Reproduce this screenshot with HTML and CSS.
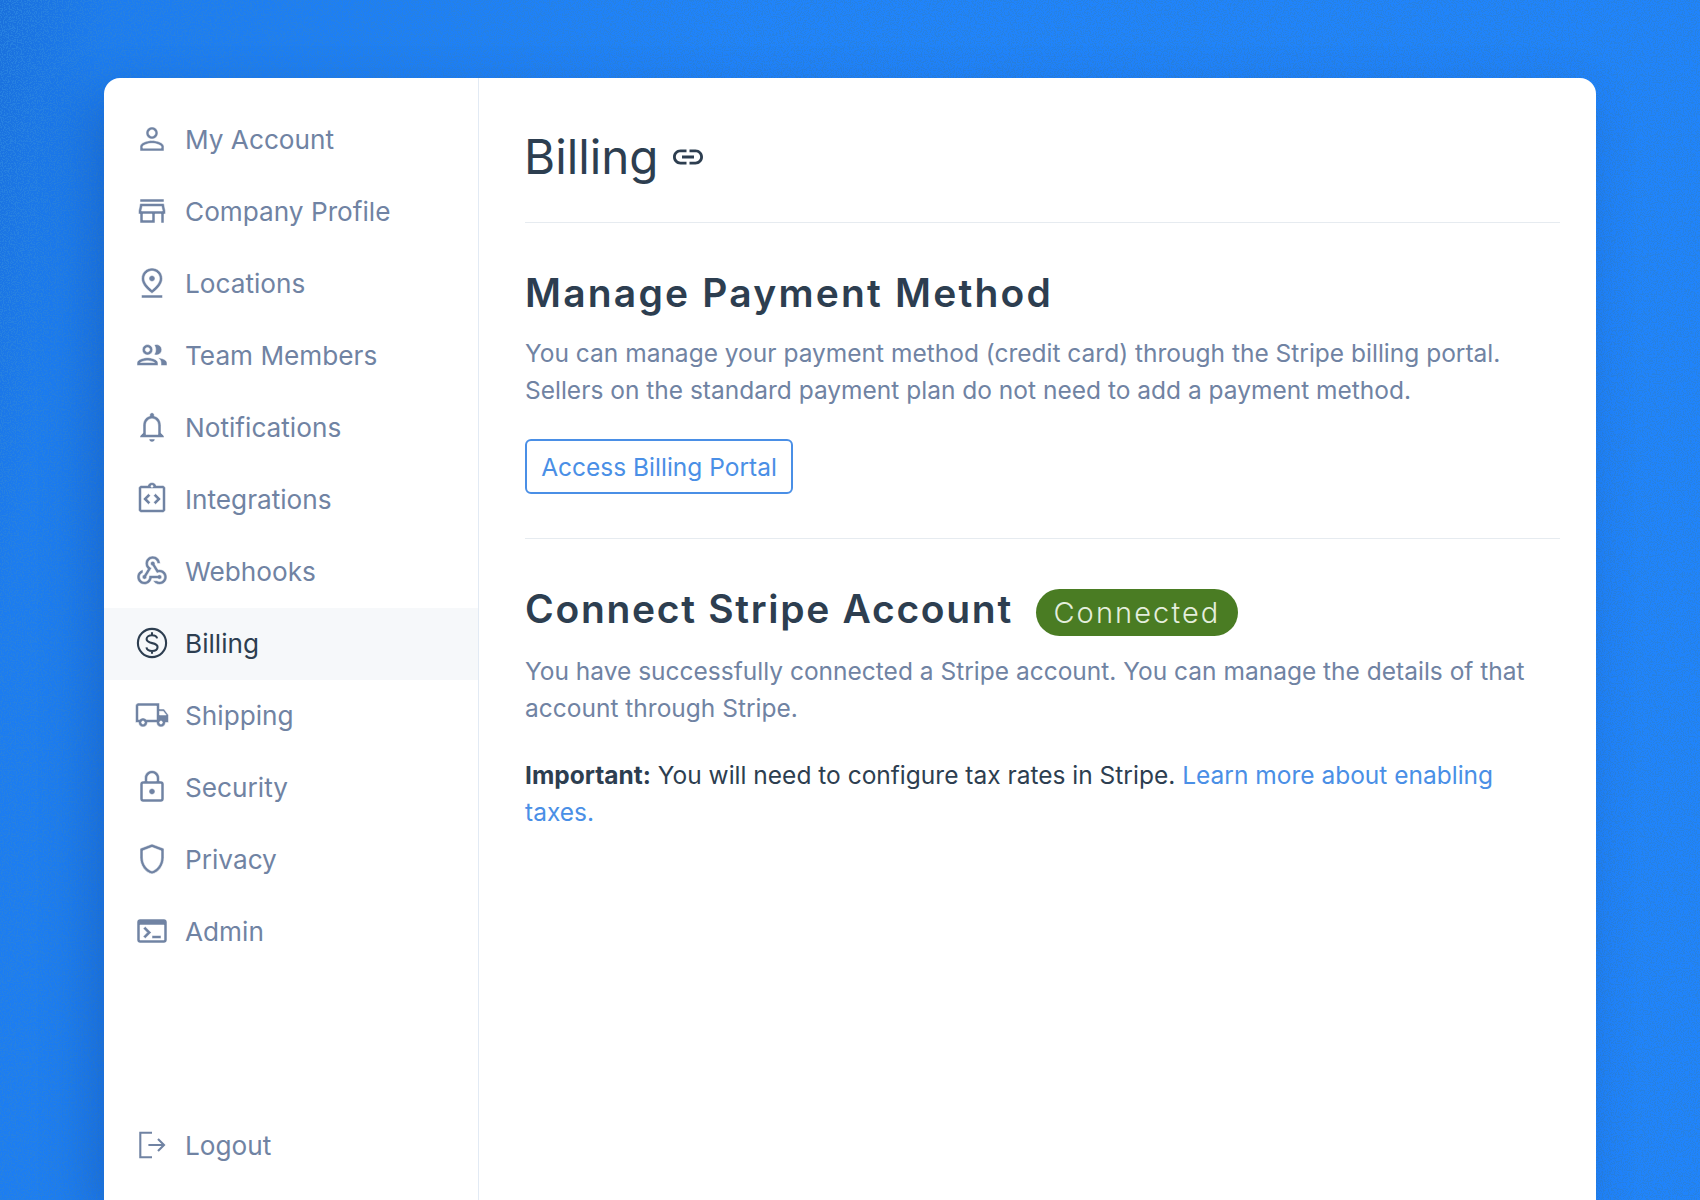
FILE: index.html
```html
<!DOCTYPE html>
<html lang="en">
<head>
    <meta charset="UTF-8">
    <title>Billing</title>
    <link rel="stylesheet" href="styles.css">
</head>
<body>
    <svg class="noise" aria-hidden="true">
        <filter id="grain" x="0" y="0" width="100%" height="100%">
            <feTurbulence type="fractalNoise" baseFrequency="0.85" numOctaves="2" seed="4"/>
            <feColorMatrix values="0 0 0 0 0.02  0 0 0 0 0.22  0 0 0 0 0.75  9 0 0 0 -4.4"/>
        </filter>
        <rect width="100%" height="100%" filter="url(#grain)"/>
    </svg>

    <div class="card">
        <nav class="sidebar">
            <a class="nav-item">
                <svg class="nav-icon" viewBox="0 0 24 24"><path d="M12 5.9c1.16 0 2.1.94 2.1 2.1s-.94 2.1-2.1 2.1S9.9 9.16 9.9 8s.94-2.1 2.1-2.1m0 9c2.97 0 6.1 1.46 6.1 2.1v1.1H5.9V17c0-.64 3.13-2.1 6.1-2.1M12 4C9.79 4 8 5.79 8 8s1.79 4 4 4 4-1.79 4-4-1.79-4-4-4zm0 9c-2.67 0-8 1.34-8 4v3h16v-3c0-2.66-5.33-4-8-4z"/></svg>
                My Account
            </a>
            <a class="nav-item">
                <svg class="nav-icon" viewBox="0 0 24 24"><path d="M18.36 9l.6 3H5.04l.6-3h12.72M20 4H4v2h16V4zm0 3H4l-1 5v2h1v6h10v-6h4v6h2v-6h1v-2l-1-5zM6 18v-4h6v4H6z"/></svg>
                Company Profile
            </a>
            <a class="nav-item">
                <svg class="nav-icon" viewBox="0 0 24 24"><path d="M12 4c1.93 0 5 1.4 5 5.15 0 2.16-1.72 4.67-5 7.32-3.28-2.65-5-5.17-5-7.32C7 5.4 10.07 4 12 4m0-2C8.73 2 5 4.46 5 9.15c0 3.12 2.33 6.41 7 9.85 4.67-3.44 7-6.73 7-9.85C19 4.46 15.27 2 12 2z"/><path d="M12 7c-1.1 0-2 .9-2 2s.9 2 2 2c1.11 0 2-.9 2-2s-.89-2-2-2zM5 20h14v2H5v-2z"/></svg>
                Locations
            </a>
            <a class="nav-item">
                <svg class="nav-icon" viewBox="0 0 24 24"><path d="M9 13.75c-2.34 0-7 1.17-7 3.5V19h14v-1.75c0-2.33-4.66-3.5-7-3.5zM4.34 17c.84-.58 2.87-1.25 4.66-1.25s3.82.67 4.66 1.25H4.34zM9 12c1.93 0 3.5-1.57 3.5-3.5S10.93 5 9 5 5.5 6.57 5.5 8.5 7.07 12 9 12zm0-5c.83 0 1.5.67 1.5 1.5S9.83 10 9 10s-1.5-.67-1.5-1.5S8.17 7 9 7zm7.04 6.81c1.16.84 1.96 1.96 1.96 3.44V19h4v-1.75c0-2.02-3.5-3.17-5.96-3.44zM15 12c1.93 0 3.5-1.57 3.5-3.5S16.93 5 15 5c-.54 0-1.04.13-1.5.35.63.89 1 1.98 1 3.15s-.37 2.26-1 3.15c.46.22.96.35 1.5.35z"/></svg>
                Team Members
            </a>
            <a class="nav-item">
                <svg class="nav-icon" viewBox="0 0 24 24"><path d="M12 22c1.1 0 2-.9 2-2h-4c0 1.1.9 2 2 2zm6-6v-5c0-3.07-1.63-5.64-4.5-6.32V4c0-.83-.67-1.5-1.5-1.5s-1.5.67-1.5 1.5v.68C7.64 5.36 6 7.92 6 11v5l-2 2v1h16v-1l-2-2zm-2 1H8v-6c0-2.48 1.51-4.5 4-4.5s4 2.02 4 4.5v6z"/></svg>
                Notifications
            </a>
            <a class="nav-item">
                <svg class="nav-icon" viewBox="0 0 24 24"><path d="M11 14.17L8.83 12 11 9.83 9.59 8.41 6 12l3.59 3.59zM14.41 15.59L18 12l-3.59-3.59L13 9.83 15.17 12 13 14.17z"/><path d="M19 3h-4.18C14.4 1.84 13.3 1 12 1s-2.4.84-2.82 2H5c-1.1 0-2 .9-2 2v14c0 1.1.9 2 2 2h14c1.1 0 2-.9 2-2V5c0-1.1-.9-2-2-2zm-7-.25c.41 0 .75.34.75.75s-.34.75-.75.75-.75-.34-.75-.75.34-.75.75-.75zM19 19H5V5h14v14z"/></svg>
                Integrations
            </a>
            <a class="nav-item">
                <svg class="nav-icon" viewBox="0 0 24 24"><path d="M10 15h5.88c.27-.31.67-.5 1.12-.5.83 0 1.5.67 1.5 1.5s-.67 1.5-1.5 1.5c-.44 0-.84-.19-1.12-.5H11.9c-.46 2.28-2.48 4-4.9 4-2.76 0-5-2.24-5-5 0-2.42 1.72-4.44 4-4.9v2.07c-1.16.41-2 1.53-2 2.83 0 1.65 1.35 3 3 3s3-1.35 3-3v-2zm2.5-11c1.65 0 3 1.35 3 3h2c0-2.76-2.24-5-5-5s-5 2.24-5 5c0 1.43.6 2.71 1.55 3.62l-2.35 3.9C6.02 14.66 5.5 15.27 5.5 16c0 .83.67 1.5 1.5 1.5s1.5-.67 1.5-1.5c0-.16-.02-.31-.07-.45l3.38-5.63C10.49 9.61 9.5 8.42 9.5 7c0-1.65 1.35-3 3-3zm4.5 9c-.64 0-1.23.2-1.72.54l-3.05-5.07C11.53 8.35 11 7.74 11 7c0-.83.67-1.5 1.5-1.5S14 6.17 14 7c0 .15-.02.29-.06.43l2.19 3.65c.28-.05.57-.08.87-.08 2.76 0 5 2.24 5 5s-2.24 5-5 5c-1.85 0-3.47-1.01-4.33-2.5h2.67c.48.32 1.05.5 1.66.5 1.65 0 3-1.35 3-3s-1.35-3-3-3z"/></svg>
                Webhooks
            </a>
            <a class="nav-item active">
                <svg class="nav-icon" viewBox="0 0 24 24"><circle class="line" cx="12" cy="12" r="9.4"/><path class="line" d="M15.4 8.9c-.3-1.4-1.6-2.1-3.4-2.1-2 0-3.6 1-3.6 2.6 0 3.6 7.3 1.8 7.3 5.3 0 1.7-1.7 2.6-3.7 2.6-1.9 0-3.4-.8-3.7-2.4M12 4.8v2M12 17.2v2"/></svg>
                Billing
            </a>
            <a class="nav-item">
                <svg class="nav-icon" viewBox="0 0 24 24"><path d="M20 8h-3V4H3c-1.1 0-2 .9-2 2v11h2c0 1.66 1.34 3 3 3s3-1.34 3-3h6c0 1.66 1.34 3 3 3s3-1.34 3-3h2v-5l-3-4zm-.5 1.5l1.96 2.5H17V9.5h2.5zM6 18c-.55 0-1-.45-1-1s.45-1 1-1 1 .45 1 1-.45 1-1 1zm2.22-3c-.55-.61-1.33-1-2.22-1s-1.67.39-2.22 1H3V6h12v9H8.22zM18 18c-.55 0-1-.45-1-1s.45-1 1-1 1 .45 1 1-.45 1-1 1z"/></svg>
                Shipping
            </a>
            <a class="nav-item">
                <svg class="nav-icon" viewBox="0 0 24 24"><path d="M18 8h-1V6c0-2.76-2.24-5-5-5S7 3.24 7 6v2H6c-1.1 0-2 .9-2 2v10c0 1.1.9 2 2 2h12c1.1 0 2-.9 2-2V10c0-1.1-.9-2-2-2zM9 6c0-1.66 1.34-3 3-3s3 1.34 3 3v2H9V6zm9 14H6V10h12v10zm-6-3c1.1 0 2-.9 2-2s-.9-2-2-2-2 .9-2 2 .9 2 2 2z"/></svg>
                Security
            </a>
            <a class="nav-item">
                <svg class="nav-icon" viewBox="0 0 24 24"><path d="M12 4.24l6 2.25v4.7c0 4-2.55 7.7-6 8.83-3.45-1.13-6-4.82-6-8.83v-4.7l6-2.25M12 2L4 5v6.09c0 5.05 3.41 9.76 8 10.91 4.59-1.15 8-5.86 8-10.91V5l-8-3z"/></svg>
                Privacy
            </a>
            <a class="nav-item">
                <svg class="nav-icon" viewBox="0 0 24 24"><path d="M20 4H4c-1.1 0-2 .9-2 2v12c0 1.1.9 2 2 2h16c1.1 0 2-.9 2-2V6c0-1.1-.9-2-2-2zm0 14H4V8h16v10zm-2-1h-6v-2h6v2zM7.5 17l-1.41-1.41L8.67 13l-2.59-2.59L7.5 9l4 4-4 4z"/></svg>
                Admin
            </a>
            <a class="nav-item logout">
                <svg class="nav-icon" viewBox="0 0 24 24"><path class="line" d="M12 3.8H4.2v16.4H12M9.6 12H20M16 8l4 4-4 4"/></svg>
                Logout
            </a>
        </nav>

        <main class="content">
            <header class="page-title">
                <h1>Billing</h1>
                <svg class="link-icon" viewBox="0 0 24 24"><path d="M3.9 12c0-1.71 1.39-3.1 3.1-3.1h4V7H7c-2.76 0-5 2.24-5 5s2.24 5 5 5h4v-1.9H7c-1.71 0-3.1-1.39-3.1-3.1zM8 13h8v-2H8v2zm9-6h-4v1.9h4c1.71 0 3.1 1.39 3.1 3.1s-1.39 3.1-3.1 3.1h-4V17h4c2.76 0 5-2.24 5-5s-2.24-5-5-5z"/></svg>
            </header>

            <section class="section">
                <h2>Manage Payment Method</h2>
                <p>You can manage your payment method (credit card) through the Stripe billing portal. Sellers on the standard payment plan do not need to add a payment method.</p>
                <button class="btn-outline">Access Billing Portal</button>
            </section>

            <section class="section last">
                <div class="section-head">
                    <h2>Connect Stripe Account</h2>
                    <span class="badge">Connected</span>
                </div>
                <p>You have successfully connected a Stripe account. You can manage the details of that account through Stripe.</p>
                <p class="note"><strong>Important:</strong> You will need to configure tax rates in Stripe. <a href="#">Learn more about enabling taxes.</a></p>
            </section>
        </main>
    </div>
</body>
</html>
```

FILE: styles.css
```css
html, body {
    margin: 0;
    height: 1200px;
    overflow: hidden;
}
body {
    position: relative;
    box-sizing: border-box;
    padding: 78px 104px 0;
    background: linear-gradient(100deg, #1a70dc 0, #1c7cf0 6%, #2084fc 40%, #2084fc 100%);
    font-family: Inter, "Liberation Sans", sans-serif;
    color: #7083a3;
}
.noise {
    position: absolute;
    top: 0;
    left: 0;
    width: 100%;
    height: 100%;
}
.card {
    position: relative;
    display: flex;
    height: 1122px;
    background: white;
    border-radius: 16px 16px 0 0;
    box-shadow: -14px 20px 50px rgba(10,50,130,0.28);
}

/* sidebar */
.sidebar {
    display: flex;
    flex-direction: column;
    box-sizing: border-box;
    width: 375px;
    padding: 26px 0 18px;
    border-right: 1px solid #e2eaf4;
}
.nav-item {
    display: flex;
    align-items: center;
    gap: 15px;
    box-sizing: border-box;
    height: 72px;
    padding: 0 0 2px 30px;
    font-size: 26.2px;
    flex-shrink: 0;
}
.nav-item.active {
    background: #f6f8fa;
    color: #2d3e50;
}
.nav-item.logout {
    margin-top: auto;
}
.nav-icon {
    width: 36px;
    height: 36px;
    fill: currentColor;
    flex-shrink: 0;
}
/* the filled icons read too heavy at this size, so trim them with a white edge */
.nav-icon path {
    stroke: white;
    stroke-width: 0.35;
}
.nav-icon .line {
    fill: none;
    stroke: currentColor;
    stroke-width: 1.4;
}

/* main column */
.content {
    flex: 1;
    padding: 0 36px 0 46px;
}
.page-title {
    display: flex;
    align-items: center;
    gap: 11px;
    height: 145px;
    box-sizing: border-box;
    padding-top: 13px;
    border-bottom: 1px solid #e6ebf0;
}
.page-title h1 {
    margin: 0 0 0 -1px;
    font-size: 47.6px;
    font-weight: 400;
    color: #2d3e50;
}
.link-icon {
    width: 36px;
    height: 36px;
    fill: #2d3e50;
}
.section {
    padding: 48px 0 44px;
    border-bottom: 1px solid #e6ebf0;
}
.section.last {
    border-bottom: none;
}
.section h2 {
    margin: 0;
    font-size: 39px;
    line-height: 44px;
    font-weight: 600;
    letter-spacing: 2.2px;
    color: #2d3e50;
}
.section.last h2 {
    letter-spacing: 1.7px;
}
.section p {
    margin: 20px 0 0;
    font-size: 24.5px;
    line-height: 37px;
}
.btn-outline {
    display: block;
    box-sizing: border-box;
    width: 268px;
    height: 55px;
    margin-top: 30px;
    border: 2px solid #4a8fe6;
    border-radius: 6px;
    background: white;
    color: #4a8fe6;
    font-family: inherit;
    font-size: 24.5px;
}
.section-head {
    display: flex;
    align-items: flex-start;
    gap: 23px;
}
.section .section-head + p {
    margin-top: 17px;
}
.badge {
    display: flex;
    align-items: center;
    justify-content: center;
    width: 202px;
    height: 47px;
    margin-top: 2px;
    border-radius: 24px;
    background: #4a7c23;
    color: #e4eedd;
    font-size: 29px;
    font-weight: 300;
    letter-spacing: 2.1px;
}
.section p.note {
    margin-top: 30px;
    color: #2d3e50;
}
.note a {
    color: #4a8fe6;
    text-decoration: none;
}
```
